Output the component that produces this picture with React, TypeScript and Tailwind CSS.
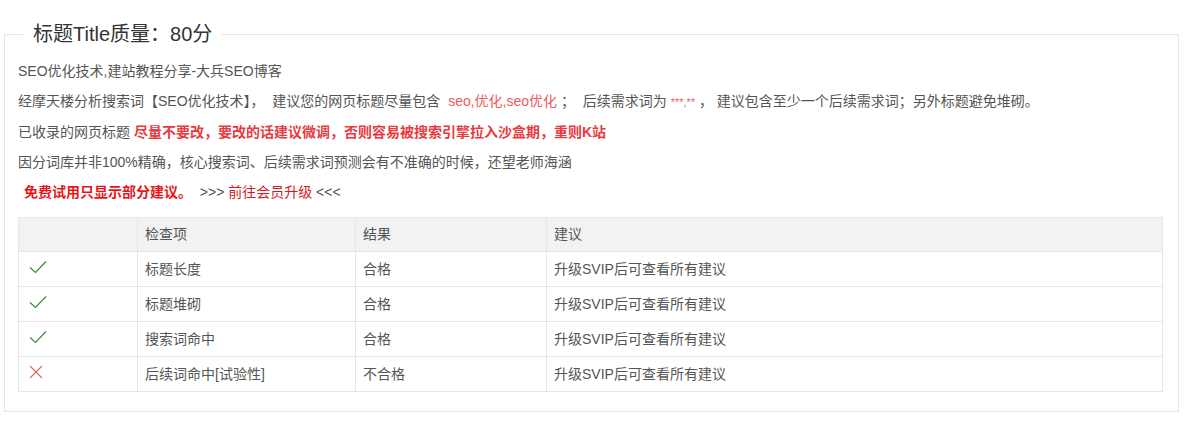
import React from "react";

const rows = [
  { ok: true, item: "标题长度", result: "合格" },
  { ok: true, item: "标题堆砌", result: "合格" },
  { ok: true, item: "搜索词命中", result: "合格" },
  { ok: false, item: "后续词命中[试验性]", result: "不合格" },
];

function Check() {
  return (
    <svg width="18" height="14" viewBox="0 0 18 14" fill="none">
      <path d="M1 7.5 L6.5 12.5 L17 1.5" stroke="#3f8a3f" strokeWidth="1.2" />
    </svg>
  );
}

function Cross() {
  return (
    <svg width="14" height="14" viewBox="0 0 14 14" fill="none">
      <path d="M1 1 L13 13 M13 1 L1 13" stroke="#e8626b" strokeWidth="1.2" />
    </svg>
  );
}

export default function App() {
  return (
    <div className="bg-white w-[1185px] h-[421px] pt-5 pl-1 pr-[6px] text-[14px] text-[#555] font-['Liberation_Sans','Noto_Sans_CJK_SC',sans-serif]">
      <fieldset className="border border-[#e6e6e6] pl-[13px] pr-[15px] pb-[19px]">
        <legend className="ml-[5px] px-[10px] text-[20px] leading-[28px] text-[#333]">
          标题Title质量：80分
        </legend>
        <div className="pt-[8px] leading-[30px] whitespace-pre">
          <p>SEO优化技术,建站教程分享-大兵SEO博客</p>
          <p>
            {"经摩天楼分析搜索词【SEO优化技术】，  建议您的网页标题尽量包含  "}
            <span className="text-[#ee5a5f]">seo,优化,seo优化</span>
            {" ；  后续需求词为 "}
            <span className="text-[#ee5a5f] text-[11px]">***,**</span>
            {" ， 建议包含至少一个后续需求词；另外标题避免堆砌。"}
          </p>
          <p>
            {"已收录的网页标题 "}
            <span className="text-[#e83a3f] font-bold">
              尽量不要改，要改的话建议微调，否则容易被搜索引擎拉入沙盒期，重则K站
            </span>
          </p>
          <p>因分词库并非100%精确，核心搜索词、后续需求词预测会有不准确的时候，还望老师海涵</p>
          <p className="pl-[6px]">
            <span className="text-[#e8151b] font-bold">免费试用只显示部分建议。</span>
            <span>{"  >>> "}</span>
            <span className="text-[#d4191f]">前往会员升级</span>
            <span>{" <<<"}</span>
          </p>
        </div>
        <table className="mt-[10px] w-full border-collapse table-fixed">
          <colgroup>
            <col className="w-[119px]" />
            <col className="w-[218px]" />
            <col className="w-[191px]" />
            <col />
          </colgroup>
          <thead>
            <tr className="bg-[#f2f2f2] h-[34px]">
              <th className="border border-[#e6e6e6] font-normal text-left px-[7px]"></th>
              <th className="border border-[#e6e6e6] font-normal text-left px-[7px]">检查项</th>
              <th className="border border-[#e6e6e6] font-normal text-left px-[7px]">结果</th>
              <th className="border border-[#e6e6e6] font-normal text-left px-[7px]">建议</th>
            </tr>
          </thead>
          <tbody>
            {rows.map((r) => (
              <tr key={r.item} className="h-[35px]">
                <td className="border border-[#e6e6e6] px-[10px]">
                  <div className="flex items-center pb-[4px]">{r.ok ? <Check /> : <Cross />}</div>
                </td>
                <td className="border border-[#e6e6e6] px-[7px]">{r.item}</td>
                <td className="border border-[#e6e6e6] px-[7px]">{r.result}</td>
                <td className="border border-[#e6e6e6] px-[7px]">升级SVIP后可查看所有建议</td>
              </tr>
            ))}
          </tbody>
        </table>
      </fieldset>
    </div>
  );
}
